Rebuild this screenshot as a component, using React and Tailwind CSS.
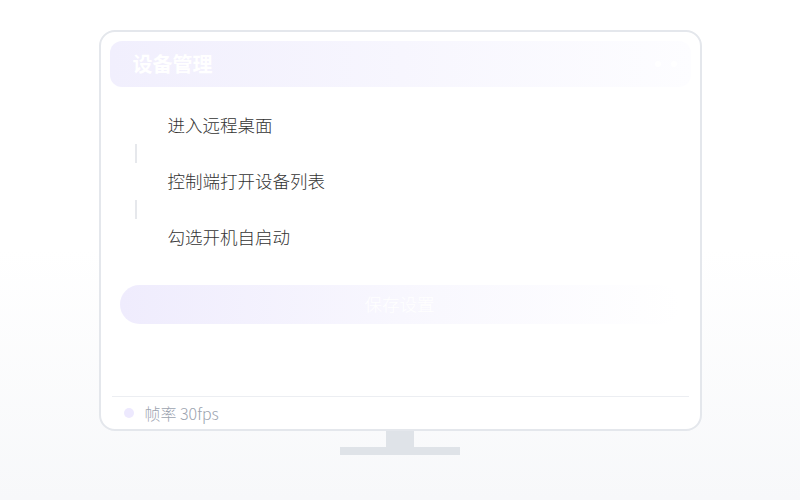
export default function App() {
  const steps = ["进入远程桌面", "控制端打开设备列表", "勾选开机自启动"];

  return (
    <div
      className="w-[800px] h-[500px] overflow-hidden bg-gradient-to-b from-white via-white to-[#f7f8fa] pt-[30px]"
      style={{ fontFamily: '"Noto Sans CJK SC", "Noto Sans", sans-serif' }}
    >
      <div className="mx-auto w-[603px] h-[401px] rounded-[16px] border-2 border-[#e4e7ec] bg-white px-[9px] pt-[9px] flex flex-col">
        <div className="h-[46px] rounded-[12px] bg-gradient-to-r from-[#f1effd] via-[#f7f6fe] to-[#fdfdff] flex items-center justify-between pl-[23px] pr-[14px]">
          <span className="text-[20px] font-bold text-white">设备管理</span>
          <div className="flex items-center gap-[10px]">
            <span className="w-[6px] h-[6px] rounded-full bg-white"></span>
            <span className="w-[6px] h-[6px] rounded-full bg-white"></span>
          </div>
        </div>

        <div className="mt-[26px] flex flex-col">
          {steps.map((s, i) => (
            <div key={s}>
              <div className="pl-[58px] h-[24px] leading-[24px] text-[17.5px] font-light text-[#333333]">
                {s}
              </div>
              {i < steps.length - 1 && (
                <div className="h-[32px] flex items-center">
                  <div className="ml-[25px] w-[2px] h-[19px] bg-[#e6e8ec]"></div>
                </div>
              )}
            </div>
          ))}
        </div>

        <button className="mt-[36px] ml-[10px] w-[560px] h-[39px] rounded-full bg-gradient-to-r from-[#efecfd] via-[#f8f7fe] to-white text-white text-[17.5px] font-light">
          保存设置
        </button>

        <div className="flex-1"></div>

        <div className="mx-[2px] border-t border-[#eceef2] h-[33px] flex items-center pl-[12px] gap-[11px]">
          <span className="w-[10px] h-[10px] rounded-full bg-[#ede9fe]"></span>
          <span className="text-[16px] font-light text-[#9ca3af]">帧率 30fps</span>
        </div>
      </div>

      <div className="mx-auto w-[28px] h-[16px] bg-[#dfe3e8]"></div>
      <div className="mx-auto w-[120px] h-[8px] bg-[#dfe3e8]"></div>
    </div>
  );
}
